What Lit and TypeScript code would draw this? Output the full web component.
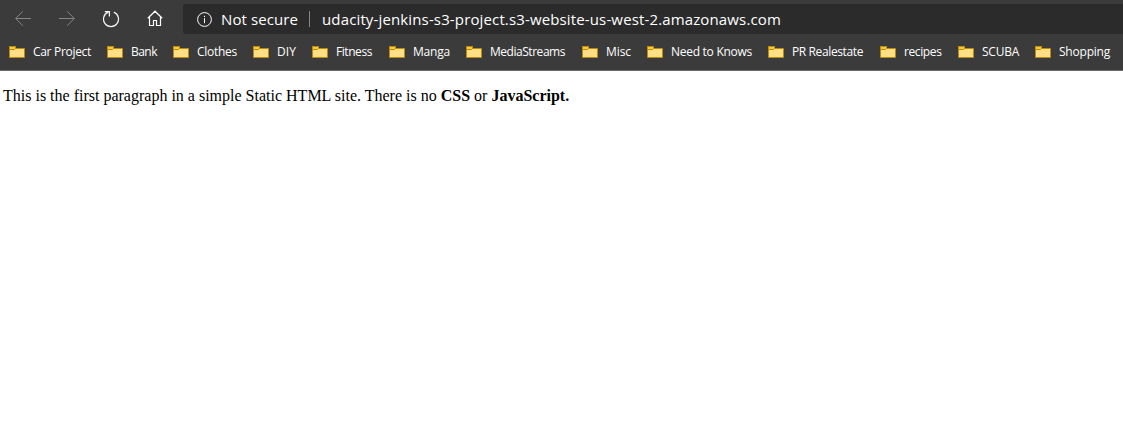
import { LitElement, html, css, svg } from "lit";
import { customElement, property } from "lit/decorators.js";

/** A single line of text spaced to occupy an exact width. */
@customElement("fitted-text")
class FittedText extends LitElement {
  @property() text = "";
  @property({ type: Number }) width = 0;

  static styles = css`
    :host { display: block; flex: none; white-space: pre; }
    .box { display: block; }
  `;

  updated() {
    const span = this.renderRoot.querySelector("span") as HTMLElement;
    span.style.letterSpacing = "0px";
    const natural = span.getBoundingClientRect().width;
    span.style.letterSpacing = `${(this.width - natural) / this.text.length}px`;
  }

  render() {
    return html`<div class="box" style="width:${this.width}px"><span>${this.text}</span></div>`;
  }
}

const folder = svg`
  <path d="M.5 .5H6.5V2.5H15.5V11.5H.5Z" fill="#ffdf85" stroke="#b98a0b"/>
  <path d="M.5 .5H6.5V2.5L5.5 3.5H.5Z" fill="#ffc933" stroke="#b98a0b"/>`;

const bookmarks: [string, number, number][] = [
  ["Car Project", 58, 98], ["Bank", 26, 66], ["Clothes", 40, 80], ["DIY", 19, 59],
  ["Fitness", 36, 77], ["Manga", 37, 77], ["MediaStreams", 75, 116], ["Misc", 25, 65],
  ["Need to Knows", 81, 121], ["PR Realestate", 71, 112], ["recipes", 37.5, 78],
  ["SCUBA", 37, 77], ["Shopping", 51, 75],
];

@customElement("app-root")
class AppRoot extends LitElement {
  static styles = css`
    :host { display: block; height: 423px; overflow: hidden; background: #fff; }
    .chrome {
      box-sizing: border-box; height: 71px; padding-top: 4px;
      background: #3b3b3b; border-bottom: 1px solid #6a6868;
      font-family: "Open Sans", "Noto Sans", sans-serif; color: #fff;
    }
    .toolbar { display: flex; height: 30px; padding-left: 15px; }
    svg { display: block; flex: none; fill: none; }
    .nav { display: flex; width: 168px; }
    .address {
      display: flex; align-items: center; flex: 1; box-sizing: border-box;
      padding-left: 14px; background: #2b2b2b; border-radius: 3px 0 0 3px;
      font-size: 15px; line-height: 30px;
    }
    .status { margin-left: 9px; }
    .divider { width: 1px; height: 16px; margin: 0 12px 0 11px; background: #858585; }
    .bookmarks { display: flex; padding: 8px 0 0 9px; font-size: 12px; line-height: 20px; color: #fff; }
    .bookmark { display: flex; flex: none; }
    .folder { margin: 4px 8px 0 0; }
    .content {
      margin: 0; padding: 16px 3px; color: #000;
      font-family: "Liberation Serif", serif; font-size: 16px; line-height: 18px;
    }
  `;

  render() {
    return html`
      <header class="chrome">
        <div class="toolbar">
          <nav class="nav">
            <svg width="44" height="30" stroke="#858585"><path d="M16 14.5H.8M7.8 7.3.7 14.5l7.1 7.2"/></svg>
            <svg width="44" height="30" stroke="#858585"><path d="M0 14.5h15.2M8.2 7.3l7.1 7.2-7.1 7.2"/></svg>
            <svg width="44" height="30" stroke="#f4f4f4" stroke-width="1.25">
              <path d="M10.8 8.2a7.5 7.5 0 1 1-5.6 0M1.8 7.6h4.6v4.8"/>
            </svg>
            <svg width="36" height="30" stroke="#fff" stroke-width="1.2">
              <path d="M.8 14.3 8 7.2l7.2 7.1M2.5 12.7v8.8h4v-5h3v5h4v-8.8"/>
            </svg>
          </nav>
          <div class="address">
            <svg width="15" height="15" viewBox="0 0 15 15" stroke="#fff">
              <circle cx="7.5" cy="7.5" r="6.9"/><path d="M7.5 6.2v5M7.5 3.8v1.3"/>
            </svg>
            <fitted-text class="status" text="Not secure" .width=${77}></fitted-text>
            <div class="divider"></div>
            <fitted-text text="udacity-jenkins-s3-project.s3-website-us-west-2.amazonaws.com" .width=${459}></fitted-text>
          </div>
        </div>
        <div class="bookmarks">
          ${bookmarks.map(([name, width, pitch]) => html`
            <div class="bookmark" style="width:${pitch}px">
              <svg class="folder" width="16" height="12">${folder}</svg>
              <fitted-text .text=${name} .width=${width}></fitted-text>
            </div>`)}
        </div>
      </header>
      <p class="content">This is the first paragraph in a simple Static HTML site. There is no <b>CSS</b> or <b>JavaScript.</b></p>
    `;
  }
}
